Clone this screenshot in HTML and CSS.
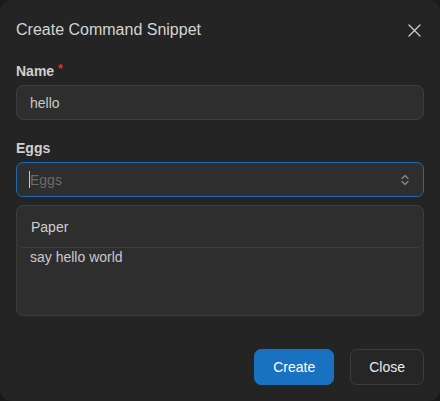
FILE: index.html
```html
<!DOCTYPE html>
<html>
<head>
<meta charset="utf-8">
<link rel="stylesheet" href="styles.css">
</head>
<body>
<div class="modal">
  <div class="header">
    <h2 class="title">Create Command Snippet</h2>
    <button class="close-x" aria-label="Close">
      <svg width="15" height="15" viewBox="0 0 15 15"><path d="M2 2 L13 13 M13 2 L2 13" stroke="#c9c9c9" stroke-width="1.4" stroke-linecap="round" fill="none"/></svg>
    </button>
  </div>
  <div class="field">
    <label class="label">Name <span class="req">*</span></label>
    <div class="input">hello</div>
  </div>
  <div class="field select-field">
    <label class="label">Eggs</label>
    <div class="input focused">
      <span class="caret"></span><span class="placeholder">Eggs</span>
      <svg class="chev" width="12" height="14" viewBox="0 0 12 14"><path d="M3 5.5 L6 2.5 L9 5.5 M3 8.5 L6 11.5 L9 8.5" stroke="#8a8a8a" stroke-width="1.2" fill="none" stroke-linecap="round" stroke-linejoin="round"/></svg>
    </div>
    <div class="dropdown"><div class="option">Paper</div></div>
  </div>
  <div class="field">
    <div class="label-space" aria-hidden="true"></div>
    <div class="textarea" aria-label="Command">say hello world</div>
  </div>
  <div class="actions">
    <button class="btn primary">Create</button>
    <button class="btn secondary">Close</button>
  </div>
</div>
</body>
</html>
```
FILE: styles.css
```css
* { box-sizing: border-box; }
html, body { margin: 0; padding: 0; }
body {
  background: #1a1a1a;
  font-family: "Liberation Sans", Arial, sans-serif;
  width: 440px;
  height: 401px;
  overflow: hidden;
}
.modal {
  width: 440px;
  height: 401px;
  background: #242424;
  border-radius: 12px;
  padding: 16px 16px 16px 16px;
  display: flex;
  flex-direction: column;
}
.header {
  height: 28px;
  display: flex;
  align-items: center;
  justify-content: space-between;
  margin-bottom: 17px;
}
.title {
  margin: 0;
  font-size: 16px;
  font-weight: normal;
  color: #d4d4d4;
}
.close-x {
  background: none;
  border: none;
  padding: 0;
  width: 28px;
  height: 28px;
  display: flex;
  align-items: center;
  justify-content: center;
  margin-right: -4px;
}
.field { margin-bottom: 18px; position: relative; }
.label {
  display: block;
  font-size: 14px;
  font-weight: bold;
  line-height: 20px;
  height: 20px;
  color: #d0d0d0;
  margin-bottom: 4px;
}
.label-space { height: 20px; margin-bottom: 4px; }
.req { color: #e03131; font-size: 12px; line-height: 0; vertical-align: 3px; }
.input {
  height: 35px;
  background: #2e2e2e;
  border: 1px solid #3d3d3d;
  border-radius: 7px;
  padding: 0 13px;
  font-size: 14px;
  color: #c9c9c9;
  display: flex;
  align-items: center;
}
.input.focused { border-color: #1c6bb5; position: relative; }
.caret {
  width: 1px;
  height: 17px;
  background: #c9c9c9;
  margin-left: -1px;
}
.placeholder { color: #6b6b6b; }
.chev { position: absolute; right: 12px; top: 10px; }
.dropdown {
  position: absolute;
  left: 0;
  right: 0;
  top: 67px;
  height: 43px;
  background: #2e2e2e;
  border: 1px solid #3d3d3d;
  border-radius: 7px;
  z-index: 2;
  padding: 4px;
}
.option {
  height: 33px;
  display: flex;
  align-items: center;
  padding-left: 10px;
  font-size: 14px;
  color: #cfcfcf;
}
.textarea {
  height: 77px;
  background: #2e2e2e;
  border: 1px solid #3d3d3d;
  border-radius: 7px;
  padding: 8px 13px;
  font-size: 14px;
  line-height: 18px;
  color: #c9c9c9;
}
.actions {
  margin-top: auto;
  display: flex;
  justify-content: flex-end;
  gap: 16px;
}
.btn {
  height: 36px;
  padding: 0 18px;
  font-family: "Liberation Sans", Arial, sans-serif;
  font-size: 14px;
  border-radius: 7px;
  border: 1px solid transparent;
}
.primary { background: #1971c2; color: #ffffff; border-color: #1971c2; }
.secondary { background: #262626; color: #eaeaea; border-color: #3d3d3d; }
```
